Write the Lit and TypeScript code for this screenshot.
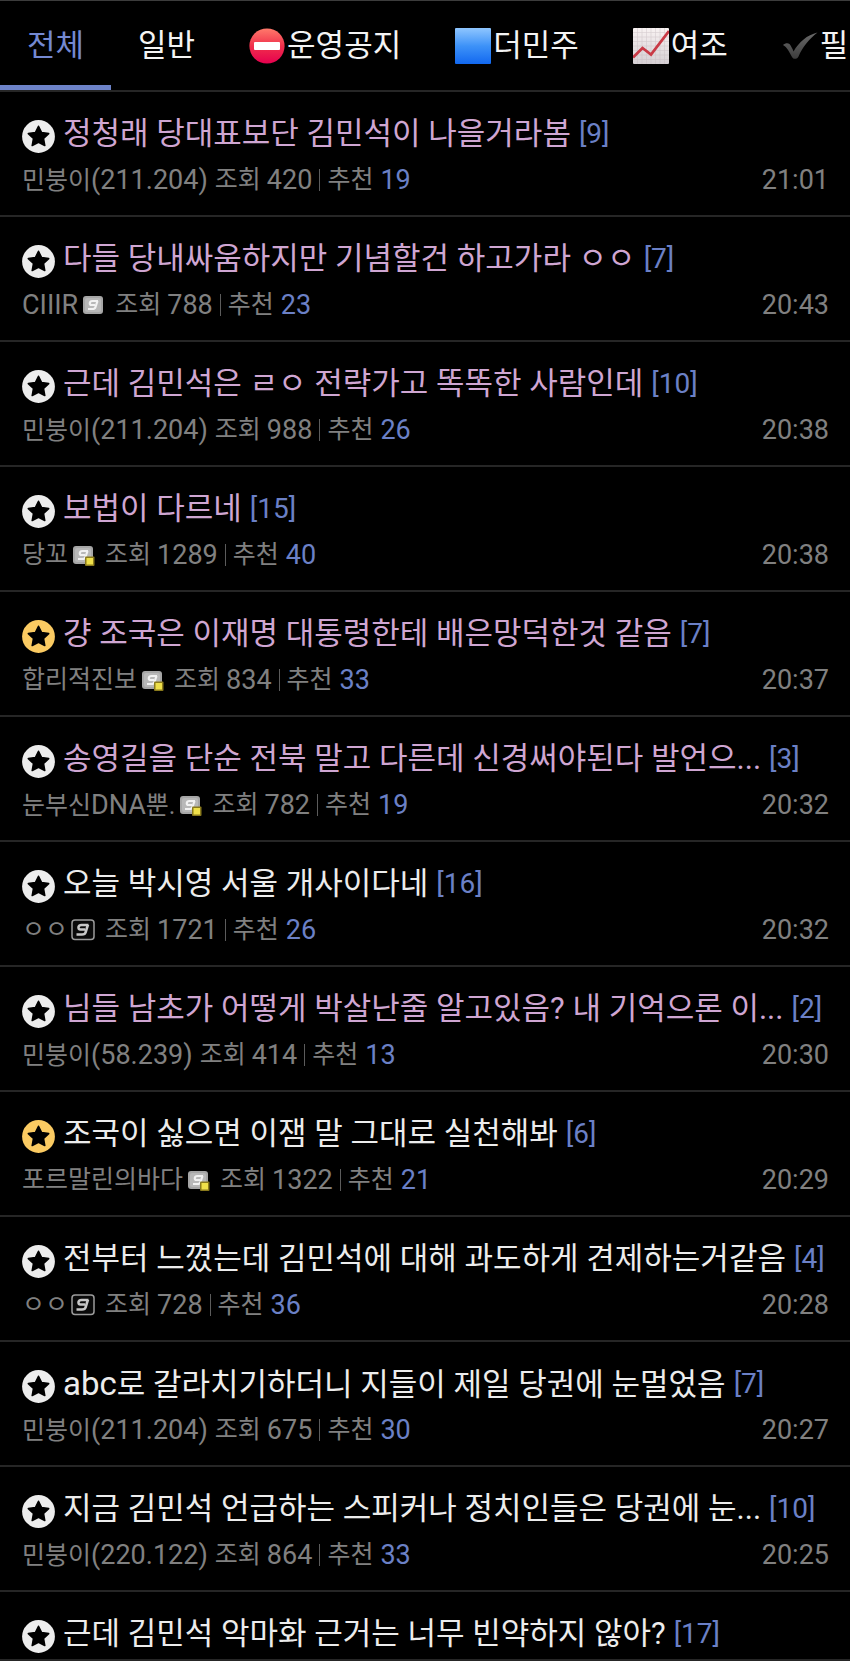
import { LitElement, html, css, svg, nothing } from "lit";
import { customElement, property } from "lit/decorators.js";

type Badge = "none" | "fixed" | "half" | "outline";
interface Meta {
  nick: string;
  ip?: string;
  badge: Badge;
  views: number;
  votes: number;
  time: string;
}
interface Post {
  title: string;
  replies: number;
  visited?: boolean;
  gold?: boolean;
  meta?: Meta;
}

const POSTS: Post[] = [
  { title: "정청래 당대표보단 김민석이 나을거라봄", replies: 9, visited: true, meta: { nick: "민붕이", ip: "211.204", badge: "none", views: 420, votes: 19, time: "21:01" } },
  { title: "다들 당내싸움하지만 기념할건 하고가라 ㅇㅇ", replies: 7, visited: true, meta: { nick: "CIIIR", badge: "fixed", views: 788, votes: 23, time: "20:43" } },
  { title: "근데 김민석은 ㄹㅇ 전략가고 똑똑한 사람인데", replies: 10, visited: true, meta: { nick: "민붕이", ip: "211.204", badge: "none", views: 988, votes: 26, time: "20:38" } },
  { title: "보법이 다르네", replies: 15, visited: true, meta: { nick: "당꼬", badge: "half", views: 1289, votes: 40, time: "20:38" } },
  { title: "걍 조국은 이재명 대통령한테 배은망덕한것 같음", replies: 7, visited: true, gold: true, meta: { nick: "합리적진보", badge: "half", views: 834, votes: 33, time: "20:37" } },
  { title: "송영길을 단순 전북 말고 다른데 신경써야된다 발언으...", replies: 3, visited: true, meta: { nick: "눈부신DNA뿐.", badge: "half", views: 782, votes: 19, time: "20:32" } },
  { title: "오늘 박시영 서울 개사이다네", replies: 16, meta: { nick: "ㅇㅇ", badge: "outline", views: 1721, votes: 26, time: "20:32" } },
  { title: "님들 남초가 어떻게 박살난줄 알고있음? 내 기억으론 이...", replies: 2, visited: true, meta: { nick: "민붕이", ip: "58.239", badge: "none", views: 414, votes: 13, time: "20:30" } },
  { title: "조국이 싫으면 이잼 말 그대로 실천해봐", replies: 6, gold: true, meta: { nick: "포르말린의바다", badge: "half", views: 1322, votes: 21, time: "20:29" } },
  { title: "전부터 느꼈는데 김민석에 대해 과도하게 견제하는거같음", replies: 4, meta: { nick: "ㅇㅇ", badge: "outline", views: 728, votes: 36, time: "20:28" } },
  { title: "abc로 갈라치기하더니 지들이 제일 당권에 눈멀었음", replies: 7, meta: { nick: "민붕이", ip: "211.204", badge: "none", views: 675, votes: 30, time: "20:27" } },
  { title: "지금 김민석 언급하는 스피커나 정치인들은 당권에 눈...", replies: 10, meta: { nick: "민붕이", ip: "220.122", badge: "none", views: 864, votes: 33, time: "20:25" } },
  { title: "근데 김민석 악마화 근거는 너무 빈약하지 않아?", replies: 17 },
];

const TAB_ICONS: Record<string, unknown> = {
  stop: svg`
    <defs><linearGradient id="r" x1="0" y1="0" x2="0" y2="1"><stop offset="0" stop-color="#ff7a6b"/><stop offset=".5" stop-color="#f0304c"/><stop offset="1" stop-color="#e6004f"/></linearGradient></defs>
    <circle cx="18" cy="18" r="17.6" fill="url(#r)"/><rect x="5" y="14" width="26" height="8" rx="1" fill="#fff"/>`,
  square: svg`
    <defs><linearGradient id="b" x1="0" y1="0" x2="0" y2="1"><stop offset="0" stop-color="#8fc6ff"/><stop offset=".5" stop-color="#3d92f8"/><stop offset="1" stop-color="#1268f0"/></linearGradient></defs>
    <rect width="36" height="36" rx="1" fill="url(#b)"/>`,
  chart: svg`
    <defs><linearGradient id="w" x1="0" y1="0" x2="0" y2="1"><stop offset="0" stop-color="#f8f2f2"/><stop offset="1" stop-color="#d6d0d4"/></linearGradient></defs>
    <rect width="36" height="36" rx="1" fill="url(#w)"/>
    <path d="M4.5 0V36M9 0V36M13.5 0V36M18 0V36M22.5 0V36M27 0V36M31.5 0V36M0 4.5H36M0 9H36M0 13.5H36M0 18H36M0 22.5H36M0 27H36M0 31.5H36" stroke="#c4b8be" stroke-width=".6" opacity=".6"/>
    <path d="M0 29.5L9.5 20L18 26.5L36 3" fill="none" stroke="#c93a46" stroke-width="2.8"/>`,
  check: svg`
    <defs><linearGradient id="k" x1="0" y1="0" x2="0" y2="1"><stop offset="0" stop-color="#6a6a6a"/><stop offset="1" stop-color="#3c3c3c"/></linearGradient></defs>
    <path d="M1 17C3 15 6 14.5 7.5 16C9 18 10.5 20.5 11.5 23.5C17 14 25 7 35.5 4.5C27 11 20.5 19 16.5 28.5C15.5 31 11.5 32 10 29C7.500 24.500 5 19 1 17Z" fill="url(#k)"/>`,
};

const TABS = [
  { label: "전체", active: true },
  { label: "일반" },
  { label: "운영공지", icon: "stop" },
  { label: "더민주", icon: "square" },
  { label: "여조", icon: "chart" },
  { label: "필", icon: "check" },
];

/* Latin runs are set a little larger than the Hangul around them. */
const mixed = (text: string) =>
  text.split(/([A-Za-z]+)/).map((part) => (/^[A-Za-z]/.test(part) ? html`<span class="latin">${part}</span>` : part));

@customElement("nick-badge")
class NickBadge extends LitElement {
  @property() kind: Badge = "fixed";
  static styles = css`
    :host { display: block; flex: none; }
    svg { display: block; }
  `;
  render() {
    if (this.kind === "outline") {
      return html`<svg width="24" height="22" viewBox="0 0 24 22" aria-hidden="true">
        <rect x="1" y="1" width="22" height="19.500" rx="3" fill="#0a0a0a" stroke="#9c9c9c" stroke-width="1.500"/>
        <path d="M17.500 6H10.500Q8 6 7.500 8Q7.200 10.500 9.500 10.500H14M17 5.500L14.500 13.500Q14 15.500 11 15.500H5.500" fill="none" stroke="#c8c8c8" stroke-width="2.600"/>
      </svg>`;
    }
    return html`<svg width="24" height="22" viewBox="0 0 24 22" aria-hidden="true">
      <rect x="2" y="2" width="20" height="18" rx="3" fill="#a6a6a6"/>
      <rect x="4" y="4" width="16" height="14" rx="2" fill="#b8b8b8"/>
      <path d="M17 7H11.500Q9 7 8.800 9Q8.600 11 10.500 11H14M16.500 7L14.500 13Q14 15 11.500 15H7" fill="none" stroke="#f2f2f2" stroke-width="2.200"/>
      ${this.kind === "half"
        ? svg`<rect x="14" y="12.500" width="9.500" height="9.500" rx="1" fill="#8a7a1c"/><rect x="15.500" y="14" width="6.500" height="6.500" fill="#efe04a"/>`
        : nothing}
    </svg>`;
  }
}

@customElement("post-row")
class PostRow extends LitElement {
  @property({ attribute: false }) post!: Post;
  static styles = css`
    :host { display: block; border-bottom: 2px solid #262626; }
    .link {
      display: flex; flex-direction: column; gap: 8px;
      padding: 22px 21px 17px 22px; color: inherit; text-decoration: none;
    }
    .short { padding-bottom: 5px; }
    .head { display: flex; height: 40px; line-height: 40px; white-space: nowrap; }
    .star { flex: none; width: 33px; height: 33px; margin: 6px 8px 0 0; color: #ededed; }
    .gold { color: #fbcb62; }
    .title { min-width: 0; overflow: hidden; text-overflow: ellipsis; font-size: 31px; color: #ececec; }
    .title .latin { font-size: 33px; }
    .visited { color: #cfa6d2; }
    .replies { margin-left: 8px; font-size: 28px; color: #6b80c6; }
    .meta { display: flex; align-items: center; height: 36px; font-size: 25px; line-height: 36px; color: #808080; white-space: nowrap; }
    .num, .time, .nick .latin { font-size: 27px; }
    .nick { margin-right: 7px; }
    .badged { margin-right: 3px; }
    nick-badge { margin-right: 10px; }
    .bar { width: 1px; height: 22px; margin: 0 7px; background: #5c5c5c; }
    .votes { margin-left: 7px; color: #6b80c6; }
    .label { margin-right: 6px; }
    .time { margin-left: auto; }
  `;
  renderMeta(m: Meta) {
    const badged = m.badge !== "none";
    return html`<span class="meta">
      <span class="nick ${badged ? "badged" : ""}">${mixed(m.nick)}${m.ip ? html`<span class="num">(${m.ip})</span>` : nothing}</span>
      ${badged ? html`<nick-badge .kind=${m.badge}></nick-badge>` : nothing}
      <span class="label">조회</span><span class="num">${m.views}</span>
      <span class="bar"></span>
      <span>추천</span><span class="num votes">${m.votes}</span>
      <time class="time">${m.time}</time>
    </span>`;
  }
  render() {
    const p = this.post;
    return html`<a class="link ${p.meta ? "" : "short"}" href="#">
      <span class="head">
        <svg class="star ${p.gold ? "gold" : ""}" viewBox="0 0 34 34" aria-hidden="true">
          <circle cx="17" cy="17" r="16.900" fill="currentColor"/>
          <path d="M17 6.500L20.200 13L27.500 14L22.200 19.100L23.500 26.300L17 22.900L10.500 26.300L11.800 19.100L6.500 14L13.800 13Z" fill="#000" stroke="#000" stroke-width="1.600" stroke-linejoin="round"/>
        </svg>
        <span class="title ${p.visited ? "visited" : ""}">${mixed(p.title)}</span>
        <span class="replies">[${p.replies}]</span>
      </span>
      ${p.meta ? this.renderMeta(p.meta) : nothing}
    </a>`;
  }
}

@customElement("app-root")
class AppRoot extends LitElement {
  static styles = css`
    :host {
      display: block; min-height: 100vh; background: #000; color: #ececec;
      font-family: Roboto, "Noto Sans CJK KR", sans-serif;
    }
    .tabs { display: flex; overflow: hidden; border-top: 1px solid #3c3c3c; border-bottom: 2px solid #262626; }
    .tab {
      display: flex; flex: none; align-items: center; gap: 2px; box-sizing: border-box; height: 89px;
      margin: 0; padding: 6px 27px 0; border: 0; border-bottom: 5px solid transparent; background: none;
      color: #f4f4f4; font-family: inherit; font-size: 31px; line-height: 40px; white-space: nowrap;
    }
    .active { color: #7489d2; border-bottom-color: #6d83c8; }
    .icon { width: 36px; height: 36px; }
  `;
  render() {
    return html`
      <nav class="tabs">
        ${TABS.map((t) => html`<button class="tab ${t.active ? "active" : ""}">
          ${t.icon ? html`<svg class="icon" viewBox="0 0 36 36" aria-hidden="true">${TAB_ICONS[t.icon]}</svg>` : nothing}<span>${t.label}</span>
        </button>`)}
      </nav>
      <main>${POSTS.map((p) => html`<post-row .post=${p}></post-row>`)}</main>
    `;
  }
}
